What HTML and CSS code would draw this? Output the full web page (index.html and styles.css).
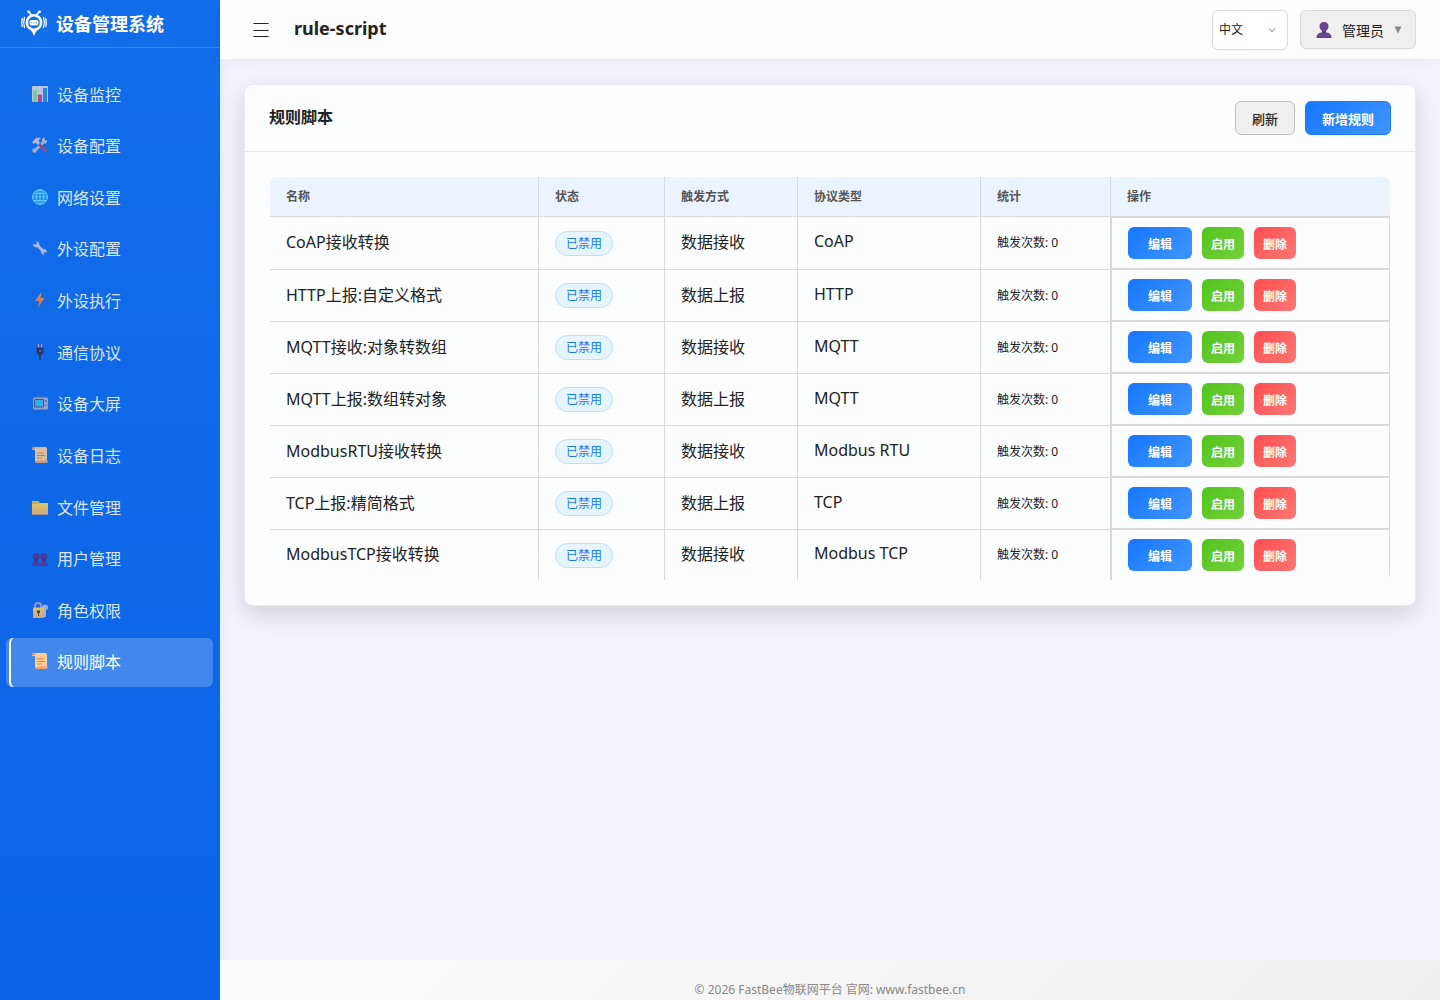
FILE: index.html
```html
<!DOCTYPE html>
<html lang="zh-CN">
<head>
    <meta charset="UTF-8">
    <meta name="viewport" content="width=device-width, initial-scale=1.0">
    <title>设备管理系统</title>
    <link rel="stylesheet" href="styles.css">
</head>
<body>
    <svg class="defs" aria-hidden="true">
        <defs>
            <linearGradient id="bolt" x1="0" y1="0" x2="0" y2="1">
                <stop offset="0" stop-color="#f5a54a"/>
                <stop offset="1" stop-color="#f0584e"/>
            </linearGradient>
            <linearGradient id="gold" x1="0" y1="0" x2="0" y2="1">
                <stop offset="0" stop-color="#ffd94f"/>
                <stop offset="1" stop-color="#f5b070"/>
            </linearGradient>
            <symbol id="scroll" viewBox="0 0 16 16">
                <path d="M1 0h12.500q1.500 0 1.500 1.500V14H3V3H1.500Q0 3 0 1.500T1 0z" fill="#ffcf96"/>
                <path d="M0 1.500Q0 0 1.500 0T3 1.500V2H.5z" fill="#e08960"/>
                <path d="M5.500 13.500H16q0 2.500-2 2.500H5q-2 0-2-2h2.500z" fill="#f0a377"/>
                <path d="M5 6h7M5 8.500h8M5 11h5" stroke="#d98358" stroke-width="1"/>
            </symbol>
        </defs>
    </svg>

    <aside class="sidebar">
        <div class="brand">
            <svg class="logo" viewBox="0 0 26 26" fill="none" stroke="#fff" stroke-linecap="round">
                <path d="M8 1.800l2.500 3.400M18 1.800l-2.500 3.400" stroke-width="1.600"/>
                <circle cx="7.500" cy="1.800" r="1.400" fill="#fff" stroke="none"/>
                <circle cx="18.500" cy="1.800" r="1.400" fill="#fff" stroke="none"/>
                <circle cx="13" cy="12.500" r="7.200" stroke-width="2.600"/>
                <path d="M9 19.500h8Q14.500 21.500 13 26Q11.500 21.500 9 19.500z" fill="#fff" stroke="none"/>
                <rect x="8.500" y="10" width="9" height="5.400" rx="2.200" fill="#fff" stroke="none"/>
                <path d="M10.700 12.700h.1M13 12.700h.1M15.300 12.700h.1" stroke="#126dea" stroke-width="1.100"/>
                <path d="M3.500 7.500Q1.800 12.500 3.500 17.500M22.500 7.500Q24.200 12.500 22.500 17.500" stroke-width="1.300"/>
                <path d="M1.300 8.500Q.3 12.500 1.300 16.500M24.700 8.500Q25.700 12.500 24.700 16.500" stroke-width="1.300"/>
            </svg>
            <span>设备管理系统</span>
        </div>
        <nav class="menu">
            <a href="#">
                <svg viewBox="0 0 16 16"><rect width="16" height="16" rx="1" fill="#dcd9ec"/><path d="M0 5h16M0 10h16M5 0v16M11 0v16" stroke="#b9b8d4" stroke-width=".5"/><path d="M1 16V4h4v12z" fill="#86dd8a"/><path d="M6 16V8.500h4V16z" fill="#d43c88"/><path d="M11 16V2h4v14z" fill="#258fdc"/></svg>
                设备监控
            </a>
            <a href="#">
                <svg viewBox="0 0 16 16"><path d="M2 14.500L12 4.500" stroke="#b8bbd3" stroke-width="2.600"/><path d="M10 5V2l2.500-2 .5 3 2.500.5-1.500 3h-3z" fill="#b8bbd3"/><path d="M7 7l7.500 7.500" stroke="#a34c62" stroke-width="2.800"/><path d="M0 5l4.500-4.500L9 1 6.500 3.500 8 6 5.500 8 3.500 5.500 1.500 7z" fill="#cac9dd"/><circle cx="2.500" cy="13.500" r="2.200" fill="#b8bbd3"/></svg>
                设备配置
            </a>
            <a href="#">
                <svg viewBox="0 0 16 16"><circle cx="8" cy="8" r="8" fill="#1696f2"/><g fill="none" stroke="#78d4ff" stroke-width="1"><circle cx="8" cy="8" r="7.400"/><ellipse cx="8" cy="8" rx="3.800" ry="7.500"/><path d="M8 0v16M0 8h16M1.500 4.500h13M1.500 11.500h13"/></g></svg>
                网络设置
            </a>
            <a href="#">
                <svg viewBox="0 0 16 16"><path d="M4 4l8.500 8.500" stroke="#c8c6df" stroke-width="3"/><path d="M4 .5L5.500 3 3.500 5 1 3.500Q.7 7 4 7.500L7.500 5.500Q7.500 1.500 4 .5zM12.500 15.500L11 13l1.500-1.500 2.500 1.500Q15.300 9.500 12 9L9 10.500q0 4 3.500 5z" fill="#c8c6df"/></svg>
                外设配置
            </a>
            <a href="#">
                <svg viewBox="0 0 16 16"><path d="M9.500 0L3 9h4l-1 7 6.500-10H8.500z" fill="url(#bolt)"/></svg>
                外设执行
            </a>
            <a href="#">
                <svg viewBox="0 0 16 16"><path d="M6.500 0v4M9.500 0v4" stroke="#d5a395" stroke-width="1.200"/><path d="M4.500 3.500h7v4q0 2-2 3.500h-3q-2-1.500-2-3.500z" fill="#302e4e"/><path d="M7 6h2.500v2H7z" fill="#685b91"/><path d="M8 10v6" stroke="#302e4e" stroke-width="1.800"/></svg>
                通信协议
            </a>
            <a href="#">
                <svg viewBox="0 0 16 16"><path d="M5 0l3.500 3L11 .5M4 13l-1 3M13 13l1 3" stroke="#76708d" stroke-width="1" fill="none"/><rect x="1" y="2.500" width="15" height="12" rx="1" fill="#b2a9c4"/><rect x="2" y="4" width="10" height="8.500" rx="1" fill="#514f70"/><rect x="3" y="5" width="8" height="6.500" fill="#37b9ee"/><circle cx="14" cy="6" r="1" fill="#8b637e"/><path d="M13 10h2" stroke="#777292"/></svg>
                设备大屏
            </a>
            <a href="#">
                <svg viewBox="0 0 16 16"><use href="#scroll"/></svg>
                设备日志
            </a>
            <a href="#">
                <svg viewBox="0 0 16 16"><path d="M0 2h6.500L8 4h8v11.500H0z" fill="#e5b547"/><path d="M0 5h7l1.500-1H16v11.500H0z" fill="url(#gold)"/></svg>
                文件管理
            </a>
            <a href="#">
                <svg viewBox="0 0 16 16"><circle cx="4.300" cy="6.500" r="3.500" fill="#523590"/><circle cx="11.700" cy="6.500" r="3.500" fill="#523590"/><path d="M2.500 8h3.500v4H2.500zM10 8h3.500v4H10z" fill="#463080"/><path d="M0 16q0-4.500 4-4.500T8 15q0-3.500 4-3.500T16 16z" fill="#523590"/></svg>
                用户管理
            </a>
            <a href="#">
                <svg viewBox="0 0 16 16"><path d="M3 6V3.500Q3 1 6 1t3 2.500V6" stroke="#aaa5cb" stroke-width="1.800" fill="none"/><path d="M13 6v9" stroke="#bfb6d3" stroke-width="2"/><circle cx="13" cy="5.500" r="3" fill="#bfb6d3"/><rect x="1" y="5.500" width="11" height="10.500" rx="1" fill="url(#gold)"/><path d="M5 8.500h3v2.500H7v3H6v-3H5z" fill="#53345c"/></svg>
                角色权限
            </a>
            <a href="#" class="active" aria-current="page">
                <svg viewBox="0 0 16 16"><use href="#scroll"/></svg>
                规则脚本
            </a>
        </nav>
    </aside>

    <div class="page">
        <header class="topbar">
            <button class="toggle" type="button" aria-label="菜单">
                <svg viewBox="0 0 16 16"><path d="M.5 1.500h15M.5 8.500h15M.5 14.500h15" stroke="#222" stroke-width="1.200"/></svg>
            </button>
            <h1>rule-script</h1>
            <div class="tools">
                <div class="lang">
                    <select aria-label="语言">
                        <option>中文</option>
                        <option>English</option>
                    </select>
                    <svg viewBox="0 0 8 8"><path d="M1 2.500l3 3 3-3" fill="none" stroke="#64748b"/></svg>
                </div>
                <button class="user" type="button">
                    <svg class="avatar" viewBox="0 0 16 16"><path d="M8 0q4.500 0 4.500 4.500 0 3-2.500 4.500v1.500q5.500 0 5.500 5.500h-15q0-5.500 5.500-5.500V9Q3.500 7.500 3.500 4.500 3.500 0 8 0z" fill="#684591"/><path d="M6 9q2 1.500 4 0v1.500q-2 1.500-4 0z" fill="#513576"/></svg>
                    <span>管理员</span>
                    <svg class="caret" viewBox="0 0 8 8"><path d="M.5 .5h7L4 7.500z" fill="#888"/></svg>
                </button>
            </div>
        </header>

        <main>
            <section class="card">
                <div class="card-header">
                    <h2>规则脚本</h2>
                    <div class="card-actions">
                        <button class="btn" type="button">刷新</button>
                        <button class="btn btn-primary" type="button">新增规则</button>
                    </div>
                </div>
                <div class="card-body">
                    <table>
                        <colgroup>
                            <col class="col-name">
                            <col class="col-status">
                            <col class="col-trigger">
                            <col class="col-protocol">
                            <col class="col-stats">
                            <col class="col-actions">
                        </colgroup>
                        <thead>
                            <tr>
                                <th>名称</th>
                                <th>状态</th>
                                <th>触发方式</th>
                                <th>协议类型</th>
                                <th>统计</th>
                                <th>操作</th>
                            </tr>
                        </thead>
                        <tbody id="rules"></tbody>
                    </table>
                </div>
            </section>
        </main>

        <footer>© 2026 FastBee物联网平台 官网: www.fastbee.cn</footer>
    </div>

    <script>
        const rules = [
            ['CoAP接收转换', '数据接收', 'CoAP'],
            ['HTTP上报:自定义格式', '数据上报', 'HTTP'],
            ['MQTT接收:对象转数组', '数据接收', 'MQTT'],
            ['MQTT上报:数组转对象', '数据上报', 'MQTT'],
            ['ModbusRTU接收转换', '数据接收', 'Modbus RTU'],
            ['TCP上报:精简格式', '数据上报', 'TCP'],
            ['ModbusTCP接收转换', '数据接收', 'Modbus TCP']
        ];

        document.getElementById('rules').innerHTML = rules.map(([name, trigger, protocol]) => `
            <tr>
                <td>${name}</td>
                <td class="status"><span class="badge">已禁用</span></td>
                <td>${trigger}</td>
                <td>${protocol}</td>
                <td class="stats">触发次数: 0</td>
                <td class="actions">
                    <div class="action-group">
                        <button class="btn-sm btn-edit" type="button">编辑</button>
                        <button class="btn-sm btn-enable" type="button">启用</button>
                        <button class="btn-sm btn-delete" type="button">删除</button>
                    </div>
                </td>
            </tr>`).join('');
    </script>
</body>
</html>
```
FILE: styles.css
```css
* {
    margin: 0;
    padding: 0;
    box-sizing: border-box;
}

body {
    display: flex;
    min-height: 100vh;
    background: #f1f4fa;
    color: #222;
    font-family: "Noto Sans", "Noto Sans CJK SC", sans-serif;
    font-size: 16px;
}

button,
select {
    font-family: inherit;
    cursor: pointer;
}

.defs {
    position: absolute;
    width: 0;
    height: 0;
}

/* sidebar */
.sidebar {
    flex: 0 0 220px;
    background: linear-gradient(180deg, #126dea, #0a63e6);
    border-right: 1px solid #1168eb;
    box-shadow: 2px 0 12px rgba(22, 119, 255, 0.08);
}

.brand {
    display: flex;
    align-items: center;
    gap: 9px;
    height: 48px;
    padding: 0 0 2px 21px;
    border-bottom: 1px solid rgba(255, 255, 255, 0.2);
    color: #fff;
    font-size: 18px;
    font-weight: 700;
}

.logo {
    width: 26px;
    height: 26px;
}

.menu {
    display: flex;
    flex-direction: column;
    justify-content: space-between;
    height: 639px;
    padding: 22px 6px 0;
}

.menu a {
    display: flex;
    align-items: center;
    gap: 9px;
    height: 49px;
    padding: 0 0 2px 23px;
    border-left: 3px solid transparent;
    border-radius: 6px;
    color: rgba(255, 255, 255, 0.85);
    text-decoration: none;
}

.menu svg {
    width: 16px;
    height: 16px;
    opacity: 0.85;
}

.menu .active {
    background: rgba(255, 255, 255, 0.22);
    background-origin: border-box;
    box-shadow: inset 2px 0 0 #fff;
    color: #fff;
}

.menu .active svg {
    opacity: 1;
}

/* top bar */
.page {
    flex: 1;
    display: flex;
    flex-direction: column;
    min-width: 0;
}

.topbar {
    display: flex;
    align-items: center;
    height: 60px;
    padding: 0 24px 0 32px;
    background: #fdfdfe;
    border-bottom: 1px solid #e9edf2;
    box-shadow: 0 2px 16px rgba(0, 0, 0, 0.04);
}

.toggle {
    display: flex;
    align-items: center;
    justify-content: center;
    width: 18px;
    height: 18px;
    margin-right: 24px;
    border: none;
    background: none;
}

.toggle svg {
    flex: none;
    width: 16px;
    height: 16px;
}

h1 {
    padding-bottom: 4px;
    font-size: 18px;
    font-weight: 700;
}

.tools {
    display: flex;
    align-items: center;
    gap: 12px;
    margin-left: auto;
}

.lang {
    position: relative;
}

.lang select {
    display: block;
    appearance: none;
    width: 76px;
    height: 40px;
    padding-left: 6px;
    border: 1px solid #d9d9d9;
    border-radius: 6px;
    background: #fff;
    color: #222;
    font-size: 12px;
}

.lang svg {
    position: absolute;
    top: 16px;
    right: 12px;
    width: 8px;
    height: 8px;
    pointer-events: none;
}

.user {
    display: flex;
    align-items: center;
    gap: 10px;
    height: 39px;
    padding: 0 13px 0 15px;
    border: 1px solid #d9d9d9;
    border-radius: 6px;
    background: #efefef;
    color: #222;
    font-size: 14px;
}

.avatar {
    width: 16px;
    height: 16px;
}

.caret {
    width: 8px;
    height: 8px;
}

/* card */
main {
    flex: 1;
    padding: 24px;
}

.card {
    border: 1px solid #e0eaf9;
    border-radius: 8px;
    background: #fcfdff;
    box-shadow: 0 8px 24px rgba(0, 0, 0, 0.14);
}

.card-header {
    display: flex;
    align-items: center;
    justify-content: space-between;
    padding: 16px 24px;
    border-bottom: 1px solid #e0eaf6;
}

h2 {
    padding-bottom: 4px;
    font-size: 16px;
    font-weight: 700;
}

.card-actions {
    display: flex;
    gap: 10px;
}

.btn {
    height: 34px;
    padding: 0 16px;
    border: 1px solid #c0c0c0;
    border-radius: 6px;
    background: #efefef;
    color: #222;
    font-size: 13px;
    font-weight: 500;
}

.btn-primary {
    border-color: #1d7aff;
    background: linear-gradient(135deg, #1677ff, #4096ff);
    color: #fff;
    font-weight: 700;
}

.card-body {
    padding: 25px;
}

/* rule table */
table {
    width: 100%;
    table-layout: fixed;
    border-collapse: separate;
    border-spacing: 0;
    border-radius: 6px;
    overflow: hidden;
}

.col-name { width: 269px; }
.col-status { width: 126px; }
.col-trigger { width: 133px; }
.col-protocol { width: 183px; }
.col-stats { width: 130px; }
.col-actions { width: 279px; }

th {
    height: 40px;
    padding: 0 16px 2px;
    border-right: 1px solid #d9d9d9;
    border-bottom: 1px solid #d9d9d9;
    background: #ebf3ff;
    color: #555;
    font-size: 12px;
    font-weight: 700;
    text-align: left;
}

th:last-child {
    border-right: none;
}

td {
    height: 52px;
    padding: 0 16px 4px;
    border-right: 1px solid #d9d9d9;
    border-bottom: 1px solid #d9d9d9;
}

.stats {
    padding-bottom: 2px;
    font-size: 12px;
}

.status {
    padding-bottom: 0;
}

.actions {
    padding-bottom: 0;
    border-left: 1px solid #d9d9d9;
    border-bottom-width: 2px;
}

tbody tr:first-child td {
    height: 53px;
}

tbody tr:first-child .actions {
    border-top: 1px solid #d9d9d9;
}

tbody tr:last-child td {
    height: 50px;
    border-bottom: none;
}

.badge {
    display: inline-block;
    padding: 0 10px;
    border: 1px solid #bfdcff;
    border-radius: 13px;
    background: #e6f4ff;
    color: #1677ff;
    font-size: 12px;
    line-height: 23px;
    vertical-align: middle;
}

.action-group {
    display: flex;
    gap: 10px;
}

.btn-sm {
    width: 42px;
    height: 32px;
    padding-top: 2px;
    border: none;
    border-radius: 6px;
    color: #fff;
    font-size: 12px;
    font-weight: 700;
}

.btn-edit {
    width: 64px;
    background: linear-gradient(135deg, #1677ff, #4096ff);
}

.btn-enable {
    background: linear-gradient(135deg, #52c41a, #73d13d);
}

.btn-delete {
    background: linear-gradient(135deg, #ff4d4f, #ff7875);
}

footer {
    height: 40px;
    padding-top: 20px;
    background: linear-gradient(135deg, #fcfcfc, #eee);
    color: #888;
    font-size: 12px;
    line-height: 20px;
    text-align: center;
}
```
